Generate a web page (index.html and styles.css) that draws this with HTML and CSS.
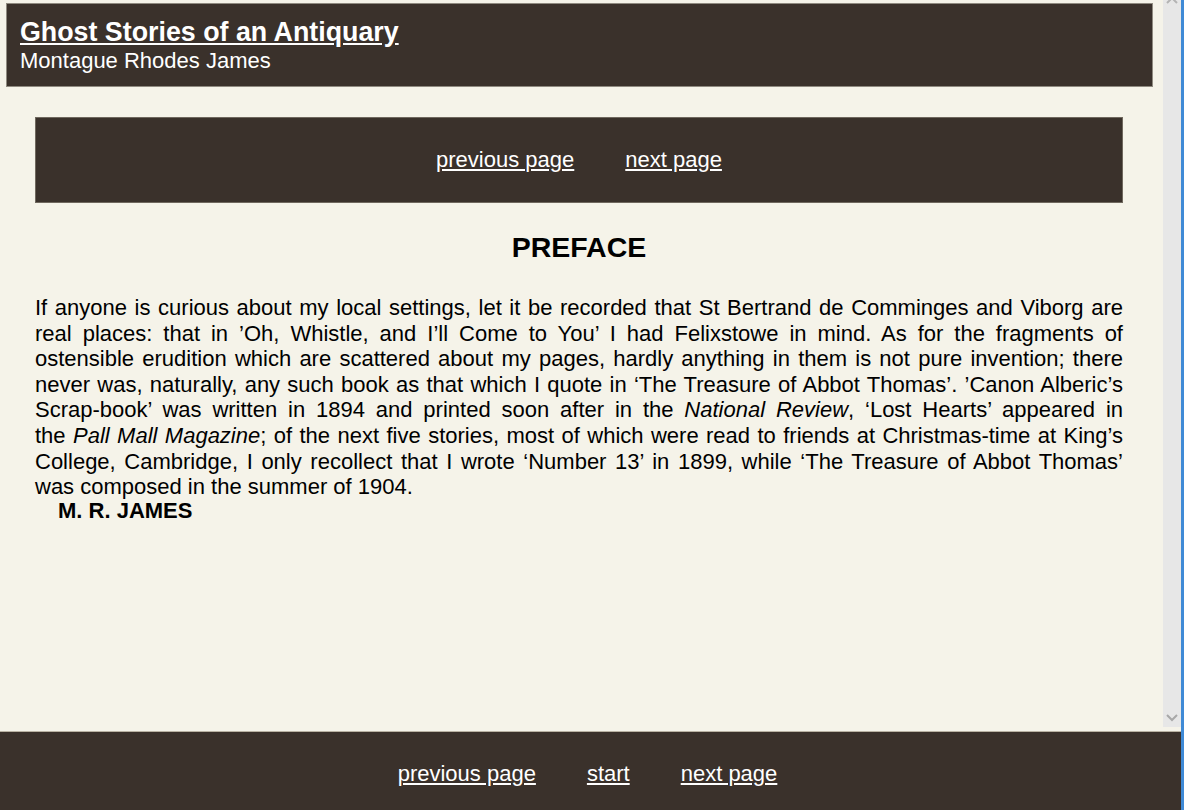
FILE: index.html
```html
<!DOCTYPE html>
<html lang="en">
<head>
<meta charset="utf-8">
<title>Ghost Stories of an Antiquary</title>
<link rel="stylesheet" href="styles.css">
</head>
<body>
<div class="window">
  <div class="frame">
    <div class="viewport">
      <div class="page">
        <header class="masthead">
          <a class="book-title" href="#">Ghost Stories of an Antiquary</a>
          <div class="author">Montague Rhodes James</div>
        </header>
        <div class="content">
          <nav class="pager">
            <a href="#">previous page</a>
            <a href="#">next page</a>
          </nav>
          <h1 class="chapter">PREFACE</h1>
          <p class="text">If anyone is curious about my local settings, let it be recorded that St Bertrand de Comminges and Viborg are real places: that in ’Oh, Whistle, and I’ll Come to You’ I had Felixstowe in mind. As for the fragments of ostensible erudition which are scattered about my pages, hardly anything in them is not pure invention; there never was, naturally, any such book as that which I quote in ‘The Treasure of Abbot Thomas’. ’Canon Alberic’s Scrap-book’ was written in 1894 and printed soon after in the <i>National Review</i>, ‘Lost Hearts’ appeared in the&nbsp;<i>Pall Mall Magazine</i>; of the next five stories, most of which were read to friends at Christmas-time at King’s College, Cambridge, I only recollect that I wrote ‘Number 13’ in 1899, while ‘The Treasure of Abbot Thomas’ was composed in the summer of 1904.</p>
          <div class="signature">M. R. JAMES</div>
        </div>
      </div>
      <div class="scrollbar">
        <svg class="arrow-up" width="12" height="8" viewBox="0 0 12 8"><path d="M1 7 L6 2 L11 7" fill="none" stroke="#b4b4b4" stroke-width="2"/></svg>
        <svg class="arrow-down" width="12" height="8" viewBox="0 0 12 8"><path d="M1 1 L6 6 L11 1" fill="none" stroke="#a8a8a8" stroke-width="2"/></svg>
      </div>
    </div>
    <footer class="footer">
      <a href="#">previous page</a>
      <a href="#">start</a>
      <a href="#">next page</a>
    </footer>
  </div>
  <div class="edge"></div>
</div>
</body>
</html>
```
FILE: styles.css
```css
html, body {
  margin: 0;
  padding: 0;
  height: 100%;
  overflow: hidden;
}
body {
  background: #f5f3e9;
  font-family: "Liberation Sans", Arial, sans-serif;
  color: #000;
}
.window {
  display: flex;
  width: 1184px;
  height: 810px;
}
.frame {
  width: 1181px;
  flex-shrink: 0;
  display: flex;
  flex-direction: column;
}
.edge {
  width: 3px;
  flex-shrink: 0;
  background: #3f8ad6;
}
.viewport {
  height: 731px;
  flex-shrink: 0;
  display: flex;
}
.page {
  width: 1163px;
  flex-shrink: 0;
  padding-top: 3px;
  box-sizing: border-box;
}
.masthead {
  margin: 0 10px 0 6px;
  height: 84px;
  box-sizing: border-box;
  background: #3a312b;
  border: 1px solid #8f8a80;
  padding: 14px 13px 0;
}
.book-title {
  display: block;
  color: #fff;
  font-weight: bold;
  font-size: 26.8px;
  line-height: 29px;
  text-decoration: underline;
  text-underline-offset: 2px;
}
.author {
  color: #fff;
  font-size: 22px;
  line-height: 25px;
  margin-top: 1px;
}
.content {
  padding: 30px 40px 0 35px;
}
.pager {
  height: 86px;
  box-sizing: border-box;
  background: #3a312b;
  border: 1px solid #6f685e;
  display: flex;
  justify-content: center;
  align-items: center;
  gap: 51px;
}
.pager a, .footer a {
  color: #fff;
  font-size: 22px;
  text-decoration: underline;
  text-underline-offset: 2px;
}
.chapter {
  margin: 28px 0 0;
  font-size: 28.5px;
  font-weight: bold;
  text-align: center;
  line-height: normal;
}
.text {
  margin: 31px 0 0;
  font-size: 22px;
  line-height: 25.6px;
  text-align: justify;
}
.signature {
  font-size: 22px;
  font-weight: bold;
  line-height: 1;
  padding-left: 23px;
}
.scrollbar {
  width: 18px;
  flex-shrink: 0;
  height: 727px;
  background: #e7e7e7;
  position: relative;
}
.arrow-up {
  position: absolute;
  left: 3px;
  top: -4px;
}
.arrow-down {
  position: absolute;
  left: 3px;
  top: 714px;
}
.footer {
  flex: 1;
  background: #3a312b;
  border-top: 1px solid #b9b2a3;
  display: flex;
  justify-content: center;
  align-items: flex-start;
  gap: 51px;
  padding: 29px 6px 0 0;
}
```
